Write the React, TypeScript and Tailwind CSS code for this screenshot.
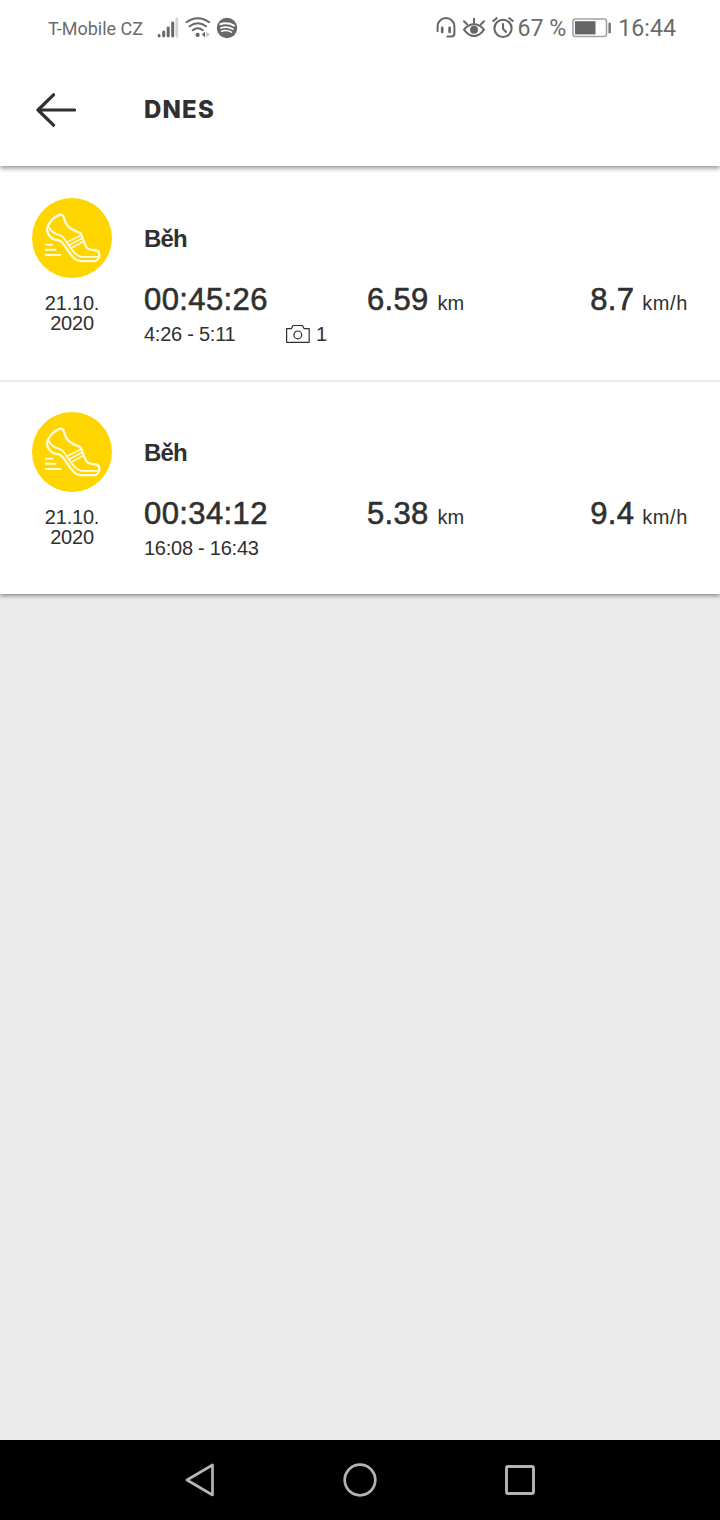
type Activity = {
  time: string;
  distance: string;
  speed: string;
  range: string;
  photos?: number;
};

const activities: Activity[] = [
  { time: '00:45:26', distance: '6.59', speed: '8.7', range: '4:26 - 5:11', photos: 1 },
  { time: '00:34:12', distance: '5.38', speed: '9.4', range: '16:08 - 16:43' },
];

function SignalIcon() {
  return (
    <svg width="22" height="22" viewBox="0 0 22 22" fill="#686868">
      <rect x="0.6" y="17" width="3" height="3.4" rx="1.4" />
      <rect x="5.2" y="13.6" width="3" height="6.8" rx="1.4" />
      <rect x="9.7" y="9.4" width="3" height="11" rx="1.4" />
      <rect x="14.2" y="4.6" width="3" height="15.8" rx="1.4" />
      <rect x="18.4" y="0.6" width="2.8" height="19.8" rx="1.3" fill="#d4d4d4" />
    </svg>
  );
}

function WifiIcon() {
  return (
    <svg width="26" height="22" viewBox="0 0 26 22" fill="none" stroke="#686868" strokeWidth="2" strokeLinecap="round">
      <path d="M1.5 5.2Q12.8-2.8 24.2 5.2" />
      <path d="M4.6 9.3Q12.8 3.2 21 9.3" />
      <path d="M7.7 13.2Q12.8 9.2 17.8 13.2" />
      <circle cx="12.6" cy="17.9" r="2.1" fill="#686868" stroke="none" />
      <path d="M16.8 17.6l3.2-2.8v5.6z" fill="#686868" stroke="none" />
      <path d="M24.9 17.6l-3.6-2.8v5.6z" fill="#c4c4c4" stroke="none" />
    </svg>
  );
}

function SpotifyIcon() {
  return (
    <svg width="22" height="22" viewBox="0 0 22 22" fill="none" stroke="#fff" strokeLinecap="round">
      <circle cx="11" cy="11" r="10.2" fill="#686868" stroke="none" />
      <path d="M4.3 7.2Q11.5 4.9 18 8.6" strokeWidth="2" />
      <path d="M5 10.9Q11.4 9 16.7 12" strokeWidth="1.8" />
      <path d="M5.6 14.2Q11 12.7 15.5 15.1" strokeWidth="1.5" />
    </svg>
  );
}

function HeadsetIcon() {
  return (
    <svg width="20" height="22" viewBox="0 0 20 22" fill="none" stroke="#666" strokeWidth="2" strokeLinecap="round">
      <path d="M1.6 14.2V9.4a8.4 8.4 0 0 1 16.8 0v7.2a3 3 0 0 1-3 3h-4" />
      <path d="M6.2 10.8v4.2M13.6 10.8v4.2" strokeWidth="2.6" />
    </svg>
  );
}

function EyeIcon() {
  return (
    <svg width="24" height="22" viewBox="0 0 24 22" fill="none" stroke="#666" strokeWidth="2" strokeLinecap="round">
      <path d="M2 12.6Q6.5 7.2 12 7.2t10 5.4Q17.5 19 12 19T2 12.6z" />
      <circle cx="12" cy="12.8" r="4" fill="#666" stroke="none" />
      <path d="M12 6V1.8M5.2 7.5L2 4.3M18.8 7.5L22 4.3" />
    </svg>
  );
}

function AlarmIcon() {
  return (
    <svg width="22" height="22" viewBox="0 0 22 22" fill="none" stroke="#666" strokeWidth="2.1" strokeLinecap="round">
      <circle cx="11" cy="11.4" r="8.6" />
      <path d="M11 7v4.6l3 3.4" />
      <path d="M1.3 4L4.6 1.2M20.7 4L17.4 1.2" />
    </svg>
  );
}

function BatteryIcon() {
  return (
    <svg width="40" height="20" viewBox="0 0 40 20" fill="none">
      <rect x="1" y="1" width="33.5" height="17.5" rx="2.5" stroke="#a2a2a2" strokeWidth="1.6" />
      <rect x="3" y="3.2" width="20.5" height="13.2" fill="#666" />
      <rect x="36.4" y="4.5" width="2.5" height="11" rx="1.2" fill="#777" />
    </svg>
  );
}

function ShoeBadge() {
  return (
    <svg width="80" height="80" viewBox="0 0 80 80" fill="none" stroke="#fffbdc" strokeLinecap="round" strokeLinejoin="round">
      <circle cx="40" cy="40" r="40" fill="#ffd500" stroke="none" />
      <path
        d="M27.5 16.8C23 18.5 18 23.5 15.700 28C14.500 31.500 15.500 36 18.500 39C21 41.800 23 42 26 42.200C30 42.500 32 47 34.500 50.500C38 55.500 40.500 60 44.500 62C46 62.900 48 63.200 50 63.200H62C65.500 63.200 67.300 60 67.300 56.500C67.300 53.500 65 52.200 61.500 52C58 51.800 55.500 51 54.300 49C51.800 44 50.500 39.500 48.500 35C45 33.700 38.500 32 35 27C32.500 23.500 32.500 20 31.200 18C30.300 16.600 29 16.300 27.500 16.800Z"
        strokeWidth="2.3"
      />
      <path d="M16.800 29C19 33.500 22.500 35.700 27 36.800C31.500 37.800 33 42 35.500 45.500C39.500 51 43 58 49.500 58.800H66.500" strokeWidth="1.8" />
      <path d="M35 44.300L49 37.300M37.200 47.200L50.300 40.200M39.500 50L51.500 43.500" strokeWidth="1.6" />
      <path d="M13.800 46.800H20.200M13.800 51.800H23.500M13.800 57H28.300" strokeWidth="1.9" />
    </svg>
  );
}

function CameraIcon() {
  return (
    <svg width="26" height="20" viewBox="0 0 26 20" fill="none" stroke="#303030" strokeWidth="1.2" strokeLinejoin="round">
      <path d="M1.600 4.700H6.300L7.900 1.500H17.500L19.100 4.700H24.200V18.300H1.600Z" />
      <circle cx="12.8" cy="10.9" r="3.9" />
    </svg>
  );
}

function Metric({ value, unit }: { value: string; unit: string }) {
  return (
    <div className="flex items-baseline">
      <span className="text-[31px] leading-9 tracking-[0.3px] [-webkit-text-stroke:0.6px_#303030]">{value}</span>
      <span className={unit === 'km' ? 'ml-[9px] text-[20px] leading-6' : 'ml-2 text-[20px] leading-6 tracking-[0.6px]'}>{unit}</span>
    </div>
  );
}

function ActivityRow({ activity }: { activity: Activity }) {
  return (
    <div className="flex h-[214px] px-8 pt-8">
      <div className="flex w-20 shrink-0 flex-col items-center">
        <ShoeBadge />
        <div className="mt-[15px] text-center text-[20px] leading-5 tracking-[-0.2px]">
          21.10.
          <br />
          2020
        </div>
      </div>
      <div className="ml-8 flex-1 pt-[25px]">
        <div className="text-[24px] leading-8 font-bold tracking-[-0.8px]">Běh</div>
        <div className="mt-[27px] flex">
          <div className="w-[223px] text-[31px] leading-9 tracking-[0.4px] [-webkit-text-stroke:0.6px_#303030]">{activity.time}</div>
          <Metric value={activity.distance} unit="km" />
          <div className="flex-1" />
          <Metric value={activity.speed} unit="km/h" />
        </div>
        <div className="mt-1 flex h-6 items-center text-[20px] leading-6 tracking-[-0.25px]">
          <span className="w-[141px]">{activity.range}</span>
          {activity.photos && (
            <span className="flex items-center gap-[5px]">
              <CameraIcon />
              {activity.photos}
            </span>
          )}
        </div>
      </div>
    </div>
  );
}

export default function App() {
  return (
    <div className="flex h-[1520px] w-[720px] flex-col overflow-hidden bg-[#ebebeb] font-['Liberation_Sans',sans-serif] text-[#303030]">
      <div className="z-10 flex h-[166px] shrink-0 flex-col bg-white shadow-[0_2px_5px_rgba(0,0,0,0.45)]">
        <div className="flex h-14 items-center pr-11 pl-12 font-[Roboto,sans-serif] text-[#6b6b6b]">
          <span className="w-[109px] pt-px text-[18px] whitespace-nowrap">T-Mobile CZ</span>
          <SignalIcon />
          <span className="ml-[6px]"><WifiIcon /></span>
          <span className="ml-[5px]"><SpotifyIcon /></span>
          <div className="ml-auto flex items-center">
            <HeadsetIcon />
            <span className="ml-[6px]"><EyeIcon /></span>
            <span className="ml-[6px]"><AlarmIcon /></span>
            <span className="ml-[3px] pt-px text-[23.2px] whitespace-nowrap">67 %</span>
            <span className="ml-[6px]"><BatteryIcon /></span>
            <span className="ml-[6px] pt-px text-[23.2px]">16:44</span>
          </div>
        </div>
        <div className="flex h-[108px] items-center pl-9">
          <svg width="40" height="34" viewBox="0 0 40 34" fill="none" stroke="#303030" strokeWidth="3.2" strokeLinecap="round" strokeLinejoin="round">
            <path d="M38.500 17H2M17.500 1.800L2 17L17.500 32.200" />
          </svg>
          <h1 className="ml-[68px] font-[Inter,sans-serif] text-[24px] leading-8 font-extrabold tracking-[1.2px]">DNES</h1>
        </div>
      </div>
      <main className="flex-1">
        <div className="bg-white shadow-[0_2px_4px_rgba(0,0,0,0.4)]">
          <ActivityRow activity={activities[0]} />
          <div className="-mb-[2px] h-[2px] bg-[#e9e9e9]" />
          <ActivityRow activity={activities[1]} />
        </div>
      </main>
      <nav className="flex h-20 shrink-0 items-center justify-center gap-[120px] bg-black">
        <svg width="40" height="40" viewBox="0 0 40 40" fill="none" stroke="#b4b4b4" strokeWidth="2.7" strokeLinejoin="round">
          <path d="M7 20L32.500 5V35Z" />
        </svg>
        <svg width="40" height="40" viewBox="0 0 40 40" fill="none" stroke="#b4b4b4" strokeWidth="2.7">
          <circle cx="20" cy="20" r="15.3" />
        </svg>
        <svg width="40" height="40" viewBox="0 0 40 40" fill="none" stroke="#b4b4b4" strokeWidth="2.9">
          <rect x="6.5" y="6.5" width="27" height="27" rx="1.5" />
        </svg>
      </nav>
    </div>
  );
}
